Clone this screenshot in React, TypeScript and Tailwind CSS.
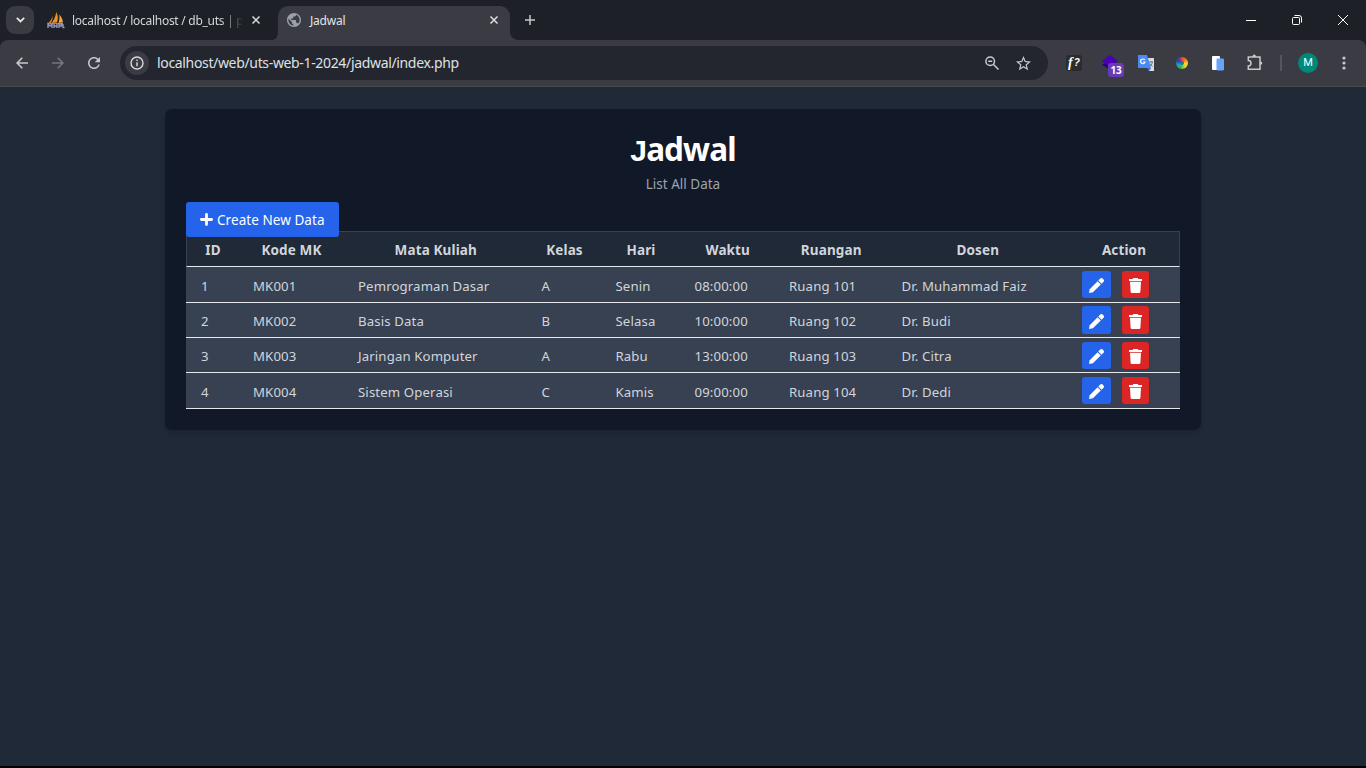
import React from "react";

type Column = { label: string; cell: string };

const columns: Column[] = [
  { label: "ID", cell: "w-[52px]" },
  { label: "Kode MK", cell: "w-[105px]" },
  { label: "Mata Kuliah", cell: "w-[183.5px]" },
  { label: "Kelas", cell: "w-[74px]" },
  { label: "Hari", cell: "w-[79px]" },
  { label: "Waktu", cell: "w-[94.5px]" },
  { label: "Ruangan", cell: "w-[112.5px]" },
  { label: "Dosen", cell: "w-[180.5px]" },
  { label: "Action", cell: "w-[112px]" },
];

const rows = [
  { height: "h-[36px]", button: "h-[27px] mt-[4px]", text: "pt-[4px]", values: ["1", "MK001", "Pemrograman Dasar", "A", "Senin", "08:00:00", "Ruang 101", "Dr. Muhammad Faiz"] },
  { height: "h-[35px]", button: "h-[28px] mt-[3px]", text: "pt-[3px]", values: ["2", "MK002", "Basis Data", "B", "Selasa", "10:00:00", "Ruang 102", "Dr. Budi"] },
  { height: "h-[35px]", button: "h-[27px] mt-[4px]", text: "pt-[3px]", values: ["3", "MK003", "Jaringan Komputer", "A", "Rabu", "13:00:00", "Ruang 103", "Dr. Citra"] },
  { height: "h-[36px]", button: "h-[27px] mt-[4px]", text: "pt-[4px]", values: ["4", "MK004", "Sistem Operasi", "C", "Kamis", "09:00:00", "Ruang 104", "Dr. Dedi"] },
];

function Cross() {
  return (
    <svg width="10" height="10" viewBox="0 0 10 10" fill="none" stroke="#dcdde0" strokeWidth="1.5">
      <path d="M1.500 1.500 8.500 8.500M8.500 1.500 1.500 8.500" />
    </svg>
  );
}

function SailIcon() {
  return (
    <svg width="18" height="18" viewBox="0 0 18 18">
      <path d="M9.2 1c1.8 3 2.2 7 .8 10.500L4.700 12C7 9 8.800 5 9.200 1Z" fill="#f29111" />
      <path d="M12.200 3.500c2.200 2 3.500 5 3.800 8l-4.600.3c1.200-2.700 1.400-5.400.8-8.300Z" fill="#f8a63c" />
      <path d="M5.500 4.500C5.200 7.500 3.500 10 1.200 12l2.400.1C5.200 10 6 7.200 5.500 4.500Z" fill="#e0892a" />
      <path d="M1 17v-4l2 2 2-2v4M7 13v4m0-2h3m0-2v4m2 0v-4h2.500v2H12m4-2v3.500h1.500" fill="none" stroke="#9496bd" strokeWidth="1.400" />
      <path d="M1 12.500h15" stroke="#a7a0aa" strokeWidth=".8" />
    </svg>
  );
}

function GlobeIcon() {
  return (
    <svg width="14" height="14" viewBox="2 2 20 20" fill="#9aa0a6">
      <path d="M12 2C6.480 2 2 6.480 2 12s4.480 10 10 10 10-4.480 10-10S17.520 2 12 2zm-1 17.930c-3.950-.490-7-3.850-7-7.930 0-.620.080-1.210.210-1.790L9 15v1c0 1.100.900 2 2 2v1.930zm6.900-2.540c-.260-.810-1-1.390-1.900-1.390h-1v-3c0-.550-.450-1-1-1H8v-2h2c.550 0 1-.450 1-1V7h2c1.100 0 2-.900 2-2v-.410c2.930 1.190 5 4.060 5 7.410 0 2.080-.800 3.970-2.100 5.390z" />
    </svg>
  );
}

function TabStrip() {
  return (
    <div className="flex h-10 bg-[#1d2027] text-[12px] text-[#d5d7db]">
      <div className="flex w-[272px] shrink-0 items-center pl-[6px]">
        <div className="flex h-[28px] w-[28px] items-center justify-center rounded-[9px] bg-[#3a3b42]">
          <svg width="9" height="6" viewBox="0 0 9 6" fill="none" stroke="#e3e4e8" strokeWidth="1.800">
            <path d="m.8.8 3.700 3.700L8.200.8" />
          </svg>
        </div>
        <div className="ml-[13px] flex"><SailIcon /></div>
        <div className="ml-[7px] w-[170px] whitespace-nowrap pt-[2px] tracking-[-0.270px] [mask-image:linear-gradient(to_right,black_148px,transparent_172px)]">
          localhost / localhost / db_uts | p
        </div>
        <div className="ml-[9px] flex"><Cross /></div>
      </div>
      <svg className="mt-auto shrink-0" width="6" height="8" viewBox="0 0 6 8"><path d="M6 0v8H0c4 0 6-4 6-8Z" fill="#3a3b43" /></svg>
      <div className="mt-[6px] flex w-[232px] shrink-0 items-center rounded-t-[10px] bg-[#3a3b43] pb-[6px] pl-[9px] pr-[11px] text-[#e3e4e8]">
        <GlobeIcon />
        <span className="ml-[9px] pt-[2px] tracking-[-0.200px]">Jadwal</span>
        <span className="ml-auto"><Cross /></span>
      </div>
      <svg className="mt-auto shrink-0" width="8" height="8" viewBox="0 0 8 8"><path d="M0 0v8h8C4 8 0 4 0 0Z" fill="#3a3b43" /></svg>
      <div className="flex grow items-center pl-[7px] pr-[18px]">
        <svg width="10" height="10" viewBox="0 0 10 10" stroke="#c4c6cb" strokeWidth="1.500"><path d="M5 0v10M0 5h10" /></svg>
        <div className="ml-auto flex items-center gap-[36px]">
          <svg width="10" height="10" viewBox="0 0 10 10" stroke="#fff"><path d="M0 5.500h10" /></svg>
          <svg width="10" height="10" viewBox="0 0 10 10" fill="none" stroke="#fff">
            <rect x=".5" y="2.500" width="7" height="7" rx="1" />
            <path d="M2.500.5H7a2.500 2.500 0 0 1 2.500 2.500v4.500" />
          </svg>
          <svg width="10" height="10" viewBox="0 0 10 10" stroke="#fff"><path d="m0 0 10 10M10 0 0 10" /></svg>
        </div>
      </div>
    </div>
  );
}

function Toolbar() {
  return (
    <div className="bg-[#1d2027]">
      <div className="flex h-[46px] items-center rounded-t-[8px] bg-[#3a3b43]">
        <svg className="ml-[16px]" width="12" height="12" viewBox="0 0 12 12" fill="none" stroke="#c7c9ce" strokeWidth="1.600"><path d="M12 6H1.200M6.300.8 1.100 6l5.200 5.200" /></svg>
        <svg className="ml-[24px]" width="12" height="12" viewBox="0 0 12 12" fill="none" stroke="#76777e" strokeWidth="1.600"><path d="M0 6h10.800M5.700.8 10.900 6l-5.200 5.200" /></svg>
        <svg className="ml-[24px]" width="12" height="12" viewBox="4 4 16 16" fill="#c7c9ce"><path d="M17.650 6.350C16.200 4.900 14.210 4 12 4c-4.420 0-7.990 3.580-7.990 8s3.570 8 7.990 8c3.730 0 6.840-2.550 7.730-6h-2.080c-.820 2.330-3.040 4-5.650 4-3.310 0-6-2.690-6-6s2.690-6 6-6c1.660 0 3.140.690 4.220 1.780L13 11h7V4l-2.350 2.350z" /></svg>
        <div className="ml-[20px] flex h-[34px] w-[928px] items-center rounded-full bg-[#23262e] pl-[5px] pr-[16px]">
          <div className="flex h-[24px] w-[24px] items-center justify-center rounded-full bg-[#3a3b43]">
            <svg width="14" height="14" viewBox="0 0 14 14" fill="none" stroke="#d9dade" strokeWidth="1.400"><circle cx="7" cy="7" r="6" /><path d="M7 6.200v4M7 3.500v1.500" /></svg>
          </div>
          <div className="ml-[8px] whitespace-nowrap pb-px text-[14px] tracking-[-0.340px] text-[#dfe1e5]">localhost/web/uts-web-1-2024/jadwal/index.php</div>
          <svg className="ml-auto" width="14" height="14" viewBox="0 0 14 14" fill="none" stroke="#c7c9ce" strokeWidth="1.500"><circle cx="5.200" cy="5.200" r="4.300" /><path d="m8.500 8.500 5 5M3.200 5.200h4" /></svg>
          <svg className="ml-[17px] mr-px" width="15" height="15" viewBox="2 2 20 20" fill="#c7c9ce"><path d="m22 9.240-7.190-.620L12 2 9.190 8.630 2 9.240l5.460 4.730L5.820 21 12 17.270 18.180 21l-1.630-7.030L22 9.240zM12 15.400l-3.760 2.270 1-4.280-3.320-2.880 4.380-.380L12 6.100l1.710 4.040 4.380.380-3.320 2.880 1 4.280L12 15.400z" /></svg>
        </div>
        <div className="ml-[18px] flex h-[16px] w-[16px] items-center justify-center gap-px rounded-[2px] bg-[#2c2c2e] font-['Liberation_Serif',serif] text-[14px] font-bold italic leading-none text-white">
          <span>f</span><span className="font-['Liberation_Sans',sans-serif] text-[10px]">?</span>
        </div>
        <div className="relative ml-[20px] h-[16px] w-[16px]">
          <svg width="16" height="16" viewBox="0 0 16 16"><path d="M0 9.500 4 8l4 2v5Z" fill="#240080" /><path d="M8 0l8 6-8 6-8-6Z" fill="#4a00b4" /></svg>
          <div className="absolute left-[6px] top-[8px] flex h-[14px] w-[16px] items-center justify-center rounded-[3px] bg-[#673ab7] text-[10px] font-bold tracking-[-0.300px] text-white">13</div>
        </div>
        <svg className="ml-[20px]" width="16" height="16" viewBox="0 0 16 16">
          <path d="M7 3h9v13h-5Z" fill="#d9dcdc" />
          <path d="M0 0h9l4 13H0Z" fill="#4a8af4" />
          <path d="M9 13h4l-2 3Z" fill="#3367d6" />
          <path d="M6.800 5a2.300 2.300 0 1 0 .3 2H5" fill="none" stroke="#fff" strokeWidth="1.200" />
          <path d="M11 7h4M13 6v1m1.500 0c-.5 2-1.500 3.300-2.500 4.200M11.800 8.500c.7 1 1.600 2 2.700 2.700" fill="none" stroke="#67797a" />
        </svg>
        <div className="ml-[22px] flex h-[12px] w-[12px] items-center justify-center rounded-full bg-[conic-gradient(#f44336,#ff7a1a_50deg,#fdd835_95deg,#c6d82c_145deg,#38b54a_195deg,#20a4b8_245deg,#174aa6_300deg,#a1308c_340deg,#f44336)]">
          <div className="h-[4px] w-[4px] rounded-full bg-[#1e74a8]" />
        </div>
        <svg className="ml-[24px]" width="12" height="15" viewBox="0 0 12 15"><rect width="8" height="14" rx="1" fill="#fff" /><rect x="4.500" y="2.500" width="7.500" height="12" rx="1.200" fill="#64a4fb" /></svg>
        <svg className="ml-[22px]" width="18" height="18" viewBox="0 0 18 18" fill="none" stroke="#c7c9ce" strokeWidth="1.500">
          <path d="M2.300 2.900H14v12.400H2.300v-3.400a2.700 2.700 0 0 0 0-5.400Z" />
          <path d="M6.500 2.300a1.700 1.700 0 0 1 3.400 0v.6H6.500ZM14.600 7.400a1.700 1.700 0 0 1 0 3.400H14V7.400Z" fill="#c7c9ce" stroke="none" />
        </svg>
        <div className="ml-[16px] h-[16px] w-[2px] bg-[#55565d]" />
        <div className="ml-[16px] flex h-[20px] w-[20px] items-center justify-center rounded-full bg-[#00897b] font-[Roboto,sans-serif] text-[11px] text-white">M</div>
        <svg className="ml-[24px]" width="4" height="14" viewBox="0 0 4 14" fill="#c7c9ce"><circle cx="2" cy="2" r="1.600" /><circle cx="2" cy="7" r="1.600" /><circle cx="2" cy="12" r="1.600" /></svg>
      </div>
      <div className="h-px bg-[#4b4a4b]" />
    </div>
  );
}

function PencilIcon() {
  return <svg width="15" height="15" viewBox="0 0 15 15" fill="#fff"><path d="M0 15 .7 11.200 8.600 3.200l3.200 3.200L3.900 14.200Z" /><path d="m9.300 2.500 1.900-1.900a1.800 1.800 0 0 1 2.500 0l.8.800a1.800 1.800 0 0 1 0 2.400l-1.900 1.900Z" /></svg>;
}

function TrashIcon() {
  return <svg width="13" height="15" viewBox="0 0 13 15" fill="#fff"><path d="M4.300 0h4.400l.7 1H13v1.900H0V1h3.600ZM1 3.700h11l-.6 10a1.400 1.400 0 0 1-1.400 1.300H3a1.400 1.400 0 0 1-1.400-1.300Z" /></svg>;
}

export default function App() {
  return (
    <div className="flex h-[768px] w-[1366px] flex-col overflow-hidden bg-[#1f2937] font-['Noto_Sans',sans-serif]">
      <TabStrip />
      <Toolbar />
      <main className="flex grow flex-col items-center border-b-2 border-black pt-[22px]">
        <section className="h-[321px] w-[1036px] rounded-[7px] bg-[#111827] px-[21px] shadow-md">
          <h1 className="h-[60px] pt-[20px] text-center text-[31.500px] font-bold leading-[40px] tracking-[-0.900px] text-white"><span className="font-['Liberation_Sans',sans-serif] text-[30px]">J</span>adwal</h1>
          <p className="mt-[5px] text-center text-[13.500px] leading-[20px] text-[#9ca3af]">List All Data</p>
          <button className="relative z-10 mt-[8px] flex h-[35px] w-[153px] items-center rounded-[3px] bg-[#2563eb] pl-[14px] text-[13.500px] text-white">
            <svg width="13" height="13" viewBox="0 0 13 13" stroke="#fff" strokeWidth="2.800" strokeLinecap="round"><path d="M6.500 1.400v10.200M1.400 6.500h10.200" /></svg>
            <span className="ml-[4px] whitespace-nowrap pt-[2px] tracking-[0.060px]">Create New Data</span>
          </button>
          <div className="-mt-[6px] w-[994px] text-[13.200px] tracking-[0.130px] text-[#d1d5db]">
            <div className="flex h-[36px] border border-[#374151] border-b-[#e5e7eb] bg-[#1f2937] text-[13.500px] font-bold">
              {columns.map((c) => (
                <div key={c.label} className={`flex shrink-0 items-center justify-center pt-[2px] ${c.cell}`}>{c.label}</div>
              ))}
            </div>
            {rows.map((r) => (
              <div key={r.values[0]} className={`flex border-b border-[#e5e7eb] bg-[#374151] ${r.height}`}>
                {r.values.map((v, i) => (
                  <div key={columns[i].label} className={`flex shrink-0 items-center whitespace-nowrap pl-[15px] ${columns[i].cell} ${r.text}`}>{v}</div>
                ))}
                <div className="flex w-[113px] shrink-0 items-start gap-[11px] pl-[15px]">
                  <button className={`flex w-[29px] items-center justify-center rounded-[3px] bg-[#2563eb] pt-[2px] ${r.button}`}><PencilIcon /></button>
                  <button className={`flex w-[27px] items-center justify-center rounded-[3px] bg-[#dc2626] pt-[2px] ${r.button}`}><TrashIcon /></button>
                </div>
              </div>
            ))}
          </div>
        </section>
      </main>
    </div>
  );
}
